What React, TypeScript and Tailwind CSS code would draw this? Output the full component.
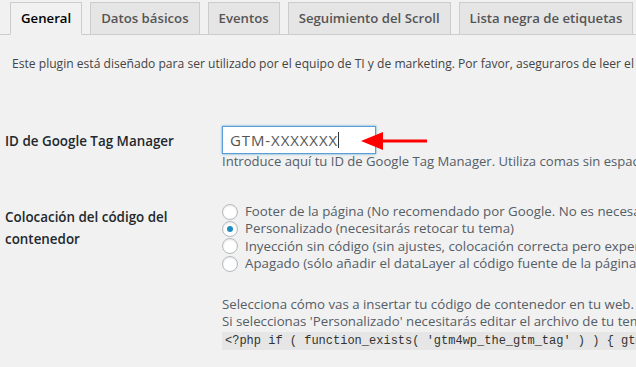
const tabs = ["General", "Datos básicos", "Eventos", "Seguimiento del Scroll", "Lista negra de etiquetas", "Integración"];

const radios = [
  { label: "Footer de la página (No recomendado por Google. No es necesario ningún ajuste)", checked: false },
  { label: "Personalizado (necesitarás retocar tu tema)", checked: true },
  { label: "Inyección sin código (sin ajustes, colocación correcta pero experimental)", checked: false },
  { label: "Apagado (sólo añadir el dataLayer al código fuente de la página)", checked: false },
];

export default function App() {
  return (
    <div className="w-[636px] h-[367px] overflow-hidden bg-[#f1f1f1] text-[#444] font-['Open_Sans',sans-serif] text-[13px]">
      {/* Tabs */}
      <div className="flex items-end pl-[10px] border-b border-[#ccc] h-[35px] whitespace-nowrap">
        {tabs.map((t, i) => (
          <div
            key={t}
            className={`shrink-0 h-[33px] -mb-px px-[10px] border border-[#ccc] text-[13.2px] font-semibold leading-[31px] ${
              i === 0 ? "bg-[#f1f1f1] border-b-[#f1f1f1] text-[#000]" : "bg-[#e5e5e5] text-[#555]"
            } ${i > 0 ? "ml-[8px]" : ""}`}
          >
            {t}
          </div>
        ))}
      </div>

      <p className="mt-[19px] pl-[12px] whitespace-nowrap leading-[20px] text-[12.1px]">
        Este plugin está diseñado para ser utilizado por el equipo de TI y de marketing. Por favor, aseguraros de leer el manual antes de continuar.
      </p>

      {/* ID row */}
      <div className="flex mt-[52px] whitespace-nowrap">
        <div className="w-[222px] shrink-0 pl-[5px] pt-[5px] text-[13.4px] font-semibold text-[#23282d]">
          ID de Google Tag Manager
        </div>
        <div>
          <div className="relative flex items-center">
            <div className="w-[154px] h-[28px] bg-white border border-[#5b9dd9] shadow-[0_0_2px_rgba(30,140,190,0.8)] pl-[7px] flex items-center text-[15px] tracking-[0.9px] text-[#555]">
              GTM-XXXXXXX<span className="inline-block w-px h-[16px] bg-[#333]" />
            </div>
            <svg className="absolute left-[139px] top-[5px]" width="66" height="20" viewBox="0 0 66 20">
              <polygon points="0,10 22,1 22,19" fill="#f00" />
              <rect x="20" y="8.5" width="46" height="3" fill="#f00" />
            </svg>
          </div>
          <p className="-mt-px leading-[16px] text-[13.1px] text-[#555d66]">
            Introduce aquí tu ID de Google Tag Manager. Utiliza comas sin espacios para introducir varios IDs.
          </p>
        </div>
      </div>

      {/* Placement row */}
      <div className="flex mt-[34px] whitespace-nowrap">
        <div className="w-[222px] shrink-0 pl-[5px] pt-[3px] text-[13.4px] font-semibold text-[#23282d] leading-[22px] whitespace-normal">
          Colocación del código del
          <br />
          contenedor
        </div>
        <div>
          <div className="flex flex-col">
            {radios.map((r) => (
              <div key={r.label} className="flex items-center h-[17.4px]">
                <span className="w-[16px] h-[16px] rounded-full border border-[#b4b9be] bg-white shadow-[inset_0_1px_2px_rgba(0,0,0,0.1)] flex items-center justify-center shrink-0">
                  {r.checked && <span className="w-[6px] h-[6px] rounded-full bg-[#1e8cbe]" />}
                </span>
                <span className="ml-[7px] text-[13.3px] text-[#555d66]">{r.label}</span>
              </div>
            ))}
          </div>
          <p className="mt-[23px] leading-[17px] text-[13.25px] text-[#555d66]">
            Selecciona cómo vas a insertar tu código de contenedor en tu web. Para compatibilidad total, usa Personalizado.
          </p>
          <p className="leading-[17px] text-[13.25px] text-[#555d66]">
            Si seleccionas 'Personalizado' necesitarás editar el archivo de tu tema y añadir esta línea justo después del body:
          </p>
          <code className="inline-block mt-[1px] bg-[#e6e6e6] px-[3px] leading-[18px] font-['Liberation_Mono',monospace] text-[12px] text-[#333]">
            {"<?php if ( function_exists( 'gtm4wp_the_gtm_tag' ) ) { gtm4wp_the_gtm_tag(); } ?>"}
          </code>
        </div>
      </div>
    </div>
  );
}
